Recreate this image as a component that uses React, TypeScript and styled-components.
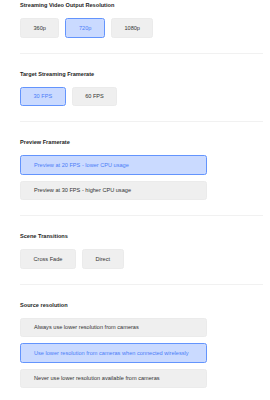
import React from "react";
import styled, { createGlobalStyle } from "styled-components";

const Global = createGlobalStyle`
  html, body { margin: 0; padding: 0; background: #ffffff; }
  body { font-family: "Liberation Sans", Arial, sans-serif; }
`;

const Page = styled.div`
  width: 270px;
  padding: 0 7px 0 20px;
  box-sizing: border-box;
`;

const Section = styled.section<{ $first?: boolean; $last?: boolean }>`
  padding: ${(p) => (p.$first ? "0" : "15px")} 0 15px;
  border-bottom: ${(p) => (p.$last ? "none" : "1px solid #f1f1f1")};
`;

const Title = styled.div`
  font-size: 5.6px;
  line-height: 10px;
  font-weight: 700;
  color: #1e1e1e;
  margin-bottom: 8px;
`;

const Row = styled.div`
  display: flex;
  gap: 6px;
`;

const Stack = styled.div`
  display: flex;
  flex-direction: column;
  gap: 6px;
  width: 187px;
`;

const Option = styled.button<{ $active?: boolean; $wide?: boolean }>`
  box-sizing: border-box;
  height: 19.5px;
  padding: ${(p) => (p.$wide ? "0 0 0 13px" : "0 12.5px")};
  display: flex;
  align-items: center;
  justify-content: ${(p) => (p.$wide ? "flex-start" : "center")};
  font-family: "Liberation Sans", Arial, sans-serif;
  font-size: 5.6px;
  white-space: nowrap;
  border-radius: 2.5px;
  border: 1px solid ${(p) => (p.$active ? "#6394fd" : "#ebebeb")};
  background: ${(p) => (p.$active ? "#cadaff" : "#efefef")};
  color: ${(p) => (p.$active ? "#4a7df7" : "#333333")};
  cursor: pointer;
`;

const Group = ({ options, active, wide }: { options: string[]; active: number; wide?: boolean }) => {
  const Container = wide ? Stack : Row;
  return (
    <Container>
      {options.map((o, i) => (
        <Option key={o} $active={i === active} $wide={wide}>
          {o}
        </Option>
      ))}
    </Container>
  );
};

export default function App() {
  return (
    <>
      <Global />
      <Page>
        <Section $first>
          <Title>Streaming Video Output Resolution</Title>
          <Group options={["360p", "720p", "1080p"]} active={1} />
        </Section>
        <Section>
          <Title>Target Streaming Framerate</Title>
          <Group options={["30 FPS", "60 FPS"]} active={0} />
        </Section>
        <Section>
          <Title>Preview Framerate</Title>
          <Group
            wide
            options={["Preview at 20 FPS - lower CPU usage", "Preview at 30 FPS - higher CPU usage"]}
            active={0}
          />
        </Section>
        <Section>
          <Title>Scene Transitions</Title>
          <Group options={["Cross Fade", "Direct"]} active={-1} />
        </Section>
        <Section $last>
          <Title>Source resolution</Title>
          <Group
            wide
            options={[
              "Always use lower resolution from cameras",
              "Use lower resolution from cameras when connected wirelessly",
              "Never use lower resolution available from cameras",
            ]}
            active={1}
          />
        </Section>
      </Page>
    </>
  );
}
